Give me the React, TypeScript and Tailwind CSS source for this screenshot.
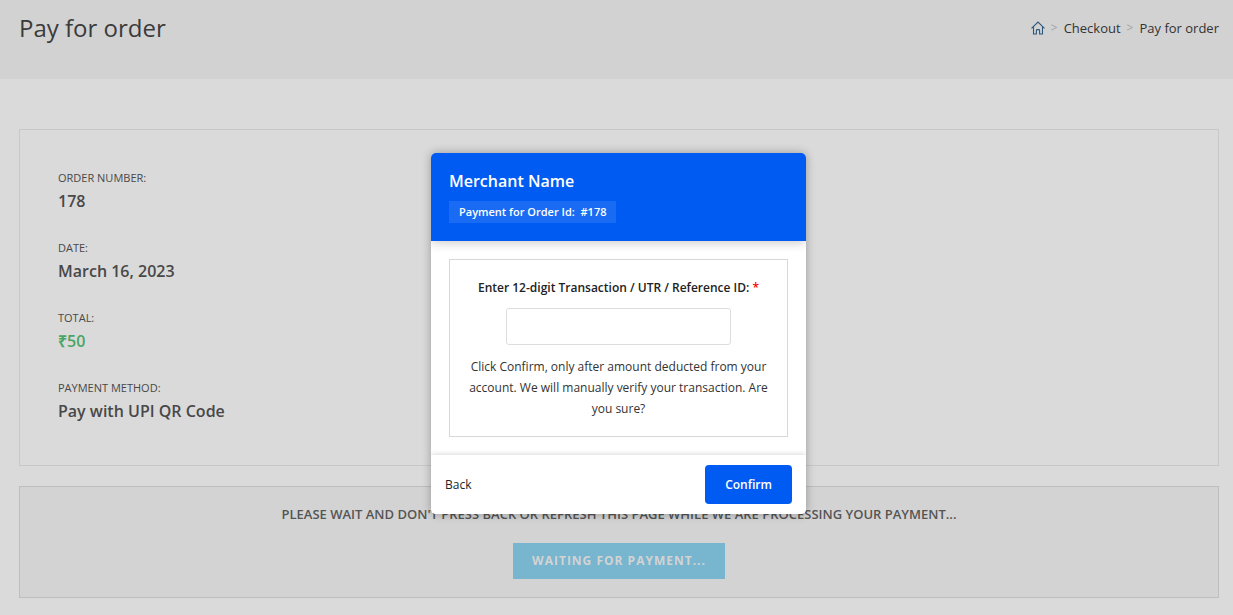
const details = [
  { label: 'Order number:', value: '178', tone: 'text-[#484848]' },
  { label: 'Date:', value: 'March 16, 2023', tone: 'text-[#484848]' },
  { label: 'Total:', value: '₹50', tone: 'text-[#4aa564]' },
  { label: 'Payment method:', value: 'Pay with UPI QR Code', tone: 'text-[#484848]' },
];

function HomeIcon() {
  return (
    <svg viewBox="0 0 14 14" className="h-3.5 w-3.5" fill="none" stroke="currentColor" strokeWidth="1.1" aria-hidden="true">
      <path d="M0.5 7.3 7 1l6.5 6.3" />
      <path d="M2.5 5.6v7.4h2.9V9.4c0-.5.3-.8.8-.8h1.6c.5 0 .8.3.8.8V13h2.9V5.6" />
    </svg>
  );
}

function PaymentDialog() {
  return (
    <div
      role="dialog"
      aria-labelledby="merchant"
      className="w-[375px] max-w-full overflow-hidden rounded-[5px] bg-white text-[#212529] shadow-[0_0_10px_rgba(0,0,0,0.3)]"
    >
      <header className="relative bg-[#005bf2] px-[18px] pt-4 pb-[18px] text-white shadow-[0_2px_10px_rgba(0,0,0,0.2)]">
        <h2 id="merchant" className="text-base leading-6 font-semibold">Merchant Name</h2>
        <p className="mt-2 inline-block bg-white/10 px-2.5 text-[11px] leading-[22px] font-semibold">
          Payment for Order Id: &nbsp;#178
        </p>
      </header>
      <div className="p-[18px]">
        <div className="flex flex-col items-center border border-[#d8d8d8] px-4 pt-[18px] pb-[17px] text-center">
          <label htmlFor="reference" className="text-xs leading-5 font-semibold text-[#222]">
            Enter 12-digit Transaction / UTR / Reference ID: <span className="text-[#f00]">*</span>
          </label>
          <input
            id="reference"
            type="text"
            className="mt-2.5 h-[37px] w-[225px] max-w-full rounded-[3px] border border-[#ddd] bg-white px-3 text-sm outline-none"
          />
          <p className="mt-[11px] text-xs leading-[21px] text-[#333]">
            Click Confirm, only after amount deducted from your account. We will manually verify your transaction. Are you sure?
          </p>
        </div>
      </div>
      <footer className="flex items-center justify-between bg-white px-3.5 py-2.5 shadow-[0_0_6px_rgba(0,0,0,0.2)]">
        <button type="button" className="text-xs leading-5 font-medium">Back</button>
        <button type="button" className="rounded bg-[#005bf2] px-5 text-xs leading-[39px] font-semibold text-white">
          Confirm
        </button>
      </footer>
    </div>
  );
}

export default function App() {
  return (
    <div className="relative min-h-screen bg-[#dadada] font-['Open_Sans',sans-serif]">
      <header className="flex items-start justify-between bg-[#d2d2d2] pt-3 pr-3.5 pb-[35px] pl-[19px]">
        <h1 className="text-2xl leading-8 text-[#3b3b3b]">Pay for order</h1>
        <nav aria-label="Breadcrumb" className="flex items-center gap-1.5 text-[13px] leading-8 text-[#333]">
          <a href="#home" aria-label="Home" className="text-[#2b5880]"><HomeIcon /></a>
          <span className="text-xs text-[#a2a2a2]">&gt;</span>
          <a href="#checkout">Checkout</a>
          <span className="text-xs text-[#a2a2a2]">&gt;</span>
          <a href="#order">Pay for order</a>
        </nav>
      </header>

      <main className="flex flex-col gap-5 pt-[50px] pr-3.5 pb-4 pl-[19px]">
        <dl className="flex flex-col gap-[27px] border border-[#c8c8c8] px-[38px] pt-10 pb-[42px]">
          {details.map((d) => (
            <div key={d.label}>
              <dt className="mb-[3px] text-[11px] leading-4 text-[#484848] uppercase">{d.label}</dt>
              <dd className={`text-base leading-6 font-semibold ${d.tone}`}>{d.value}</dd>
            </div>
          ))}
        </dl>
        <section className="flex flex-col items-center border border-[#bebebe] bg-[#d3d3d3] pt-[17px] pb-[18px]">
          <p className="text-[13px] leading-5 font-semibold text-[#555] uppercase">
            Please wait and don't press back or refresh this page while we are processing your payment...
          </p>
          <button type="button" className="mt-[19px] bg-[#78b5cf] px-[19px] text-xs leading-9 font-bold tracking-[1px] text-[#d3d3d3] uppercase">
            Waiting for payment...
          </button>
        </section>
      </main>

      <div className="absolute inset-0 flex items-start justify-center pt-[153px] pr-[15px] pl-[19px]">
        <PaymentDialog />
      </div>
    </div>
  );
}
